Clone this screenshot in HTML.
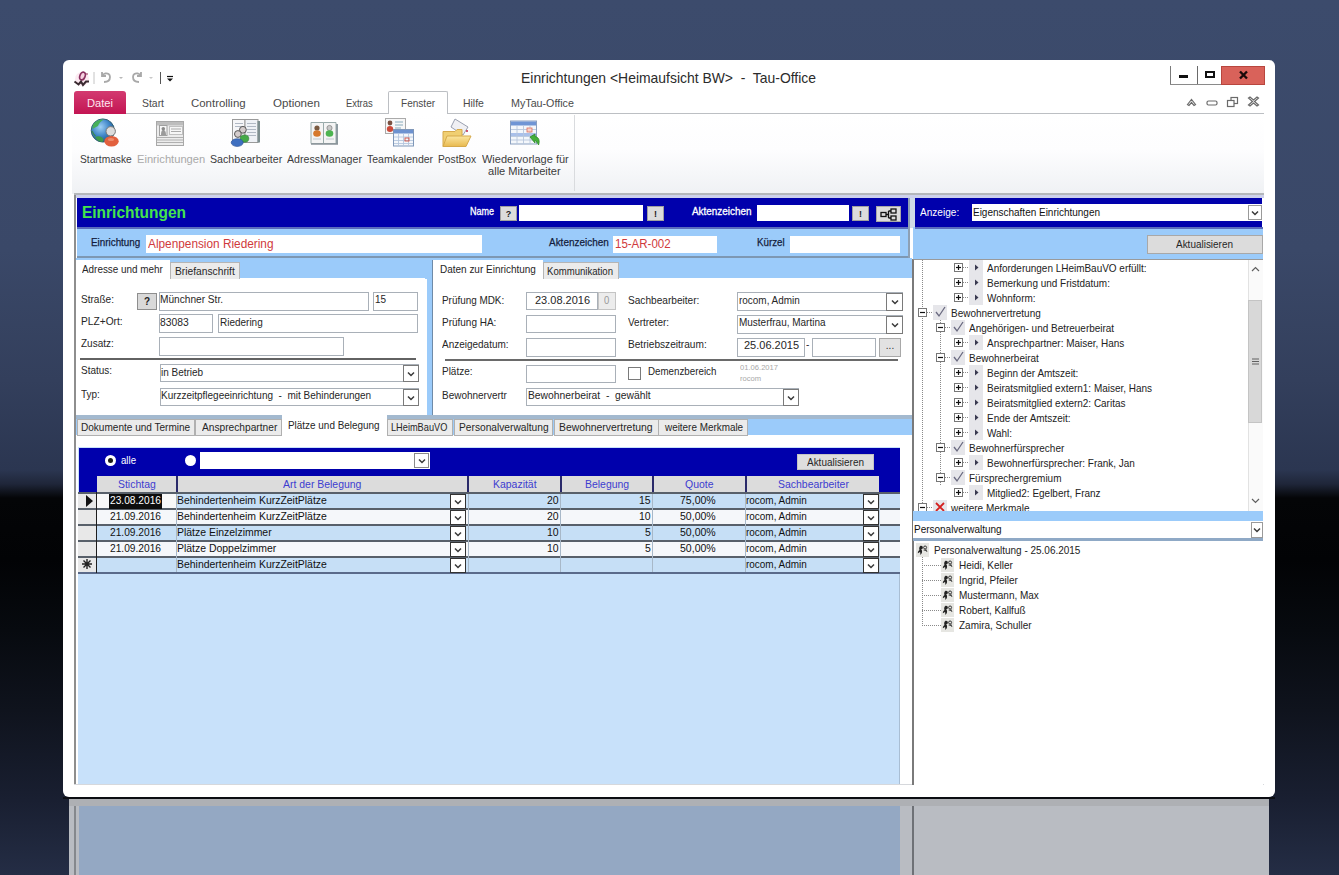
<!DOCTYPE html>
<html><head><meta charset="utf-8">
<style>
*{margin:0;padding:0;box-sizing:border-box}
html,body{width:1339px;height:875px;overflow:hidden}
body{position:relative;font-family:"Liberation Sans",sans-serif;font-size:11px;color:#111;
background:linear-gradient(to bottom,#3c4b6c 0px,#3a4868 250px,#333f5c 380px,#2b3651 470px,#1f2639 484px,#040507 498px,#020305 560px,#070a0f 630px,#0f131d 710px,#191f31 800px,#242d45 875px)}
.a{position:absolute}
.t{position:absolute;white-space:pre;transform-origin:0 0}
svg{overflow:visible}
</style></head><body>

<div class="a" style="left:63px;top:60px;width:1212px;height:737px;background:#fff;border-radius:6px;"></div>
<div class="a" style="left:72px;top:114px;width:1192px;height:80px;background:linear-gradient(#fff 0%,#fdfdfe 45%,#eff1f4 100%);"></div>
<div class="a" style="left:74px;top:113px;width:1190px;height:1px;background:#bcbfc3;"></div>
<div class="a" style="left:74px;top:193px;width:1190px;height:2px;background:#b4b7bb;"></div>
<div class="a" style="left:74px;top:91px;width:52px;height:23px;background:linear-gradient(#d33a70,#c31553);border-radius:3px 3px 0 0;"></div>
<div class="t" style="left:87.00px;top:98.19px;font-size:11px;line-height:11px;color:#ffe6ef;transform:scaleX(1.0125);">Datei</div>
<div class="a" style="left:388px;top:91px;width:60px;height:23px;background:#fff;border:1px solid #bcbfc3;border-bottom:none;border-radius:2px 2px 0 0;"></div>
<div class="t" style="left:142.00px;top:98.19px;font-size:11px;line-height:11px;color:#4a4a4a;transform:scaleX(0.9471);">Start</div>
<div class="t" style="left:191.40px;top:98.19px;font-size:11px;line-height:11px;color:#4a4a4a;transform:scaleX(1.0384);">Controlling</div>
<div class="t" style="left:272.70px;top:98.19px;font-size:11px;line-height:11px;color:#4a4a4a;transform:scaleX(1.0506);">Optionen</div>
<div class="t" style="left:346.30px;top:98.19px;font-size:11px;line-height:11px;color:#4a4a4a;transform:scaleX(0.8565);">Extras</div>
<div class="t" style="left:400.90px;top:98.19px;font-size:11px;line-height:11px;color:#4a4a4a;transform:scaleX(0.9145);">Fenster</div>
<div class="t" style="left:463.00px;top:98.19px;font-size:11px;line-height:11px;color:#4a4a4a;transform:scaleX(0.9498);">Hilfe</div>
<div class="t" style="left:511.30px;top:98.19px;font-size:11px;line-height:11px;color:#4a4a4a;transform:scaleX(0.9739);">MyTau-Office</div>
<div class="t" style="left:521.00px;top:70.73px;font-size:14.5px;line-height:14.5px;color:#2b2b2b;transform:scaleX(0.9599);">Einrichtungen &lt;Heimaufsicht BW&gt;  -  Tau-Office</div>
<div class="a" style="left:574px;top:115px;width:1px;height:76px;background:#d9dbde;"></div>
<div class="t" style="left:79.80px;top:154.19px;font-size:11px;line-height:11px;color:#3c3c3c;transform:scaleX(0.9312);">Startmaske</div>
<div class="t" style="left:136.50px;top:154.19px;font-size:11px;line-height:11px;color:#a9a9a9;transform:scaleX(1.0139);">Einrichtungen</div>
<div class="t" style="left:209.70px;top:154.19px;font-size:11px;line-height:11px;color:#3c3c3c;transform:scaleX(0.9692);">Sachbearbeiter</div>
<div class="t" style="left:286.60px;top:154.19px;font-size:11px;line-height:11px;color:#3c3c3c;transform:scaleX(0.9647);">AdressManager</div>
<div class="t" style="left:367.00px;top:154.19px;font-size:11px;line-height:11px;color:#3c3c3c;transform:scaleX(0.9567);">Teamkalender</div>
<div class="t" style="left:438.00px;top:154.19px;font-size:11px;line-height:11px;color:#3c3c3c;transform:scaleX(0.9325);">PostBox</div>
<div class="t" style="left:481.50px;top:154.19px;font-size:11px;line-height:11px;color:#3c3c3c;transform:scaleX(0.9988);">Wiedervorlage für</div>
<div class="t" style="left:487.70px;top:166.19px;font-size:11px;line-height:11px;color:#3c3c3c;transform:scaleX(1.0078);">alle Mitarbeiter</div>
<div class="a" style="left:1170px;top:66px;width:1px;height:19px;background:#7a7a7a;"></div>
<div class="a" style="left:1197px;top:66px;width:1px;height:19px;background:#6a6a6a;"></div>
<div class="a" style="left:1170px;top:84px;width:51px;height:1px;background:#8a8a8a;"></div>
<div class="a" style="left:1221px;top:66px;width:44px;height:19px;background:#d9625a;border:1px solid #b8463e;"></div>
<div class="a" style="left:1179px;top:75px;width:9px;height:3px;background:#111;"></div>
<div class="a" style="left:1205px;top:71px;width:10px;height:7px;border:2px solid #111;border-top-width:2px"></div>
<svg class="a" style="left:1238px;top:70px" width="11" height="10" viewBox="0 0 11 10"><path d="M2 1.5L9 8.5M9 1.5L2 8.5" stroke="#1a0a0a" stroke-width="2.4"/></svg>
<svg class="a" style="left:1186px;top:96px" width="80" height="12" viewBox="0 0 80 12"><g fill="none" stroke="#6a6a6a" stroke-width="1.2"><path d="M1.5 8.5L5.5 3.5L9.5 8.5L8 9.5L5.5 6.5L3 9.5Z"/><rect x="21" y="5" width="10" height="4" rx="1.5"/><rect x="45" y="1.5" width="6.5" height="6"/><rect x="41.5" y="4.5" width="6.5" height="6" fill="#fff"/><path d="M62.5 2L66.5 5.5L62.5 9L64 10L67.5 7L71 10L72.5 9L68.5 5.5L72.5 2L71 1L67.5 4L64 1Z"/></g></svg>
<svg class="a" style="left:73px;top:70px" width="105" height="18" viewBox="0 0 105 18">
<ellipse cx="9" cy="9" rx="7" ry="7" fill="#fbe4ee" opacity="0.8"/><ellipse cx="9.5" cy="6" rx="2.6" ry="4" transform="rotate(20 9.5 6)" fill="#f6d0e0" stroke="#8a3060" stroke-width="1.6"/>
<path d="M1.5 11.5L5.5 14.5L8 11.5L10 15L13 11.5H16" fill="none" stroke="#3a2a30" stroke-width="2"/>
<circle cx="14" cy="4" r="0.9" fill="#b06080"/>
<path d="M21 2V14" stroke="#c4c4c4" stroke-width="1"/>
<path d="M31 12C35 12 37 10 37 7C37 4 35 3 32 3.5L29 5M29 2V6H33" fill="none" stroke="#a9a9a9" stroke-width="1.8"/>
<path d="M46 7L48 9L50 7Z" fill="#b8b8b8"/>
<path d="M66 12C62 12 60 10 60 7C60 4 62 3 65 3.5L68 5M68 2V6H64" fill="none" stroke="#a9a9a9" stroke-width="1.8"/>
<path d="M76 7L78 9L80 7Z" fill="#c8c8c8"/>
<path d="M87.5 2V14" stroke="#555" stroke-width="1"/>
<path d="M94 6.5H100" stroke="#111" stroke-width="1.2"/><path d="M94 8.5H100L97 11.5Z" fill="#111"/>
</svg>
<svg class="a" style="left:0;top:0" width="600" height="160" viewBox="0 0 600 160">
<defs>
<radialGradient id="gl" cx="0.4" cy="0.35" r="0.7"><stop offset="0" stop-color="#9fd0f5"/><stop offset="0.55" stop-color="#3f86c8"/><stop offset="1" stop-color="#1d4f80"/></radialGradient>
<linearGradient id="fo" x1="0" y1="0" x2="0" y2="1"><stop offset="0" stop-color="#fbe6a0"/><stop offset="1" stop-color="#e8b94e"/></linearGradient>
</defs>
<!-- globe -->
<circle cx="102.8" cy="130.5" r="11.6" fill="url(#gl)" stroke="#2a5a6a" stroke-width="0.9"/>
<path d="M93 125C95 121 99 119.5 104 119.5C101 121 99 123 98 126C96 127 94 128 92.5 129C92.5 127.5 92.7 126 93 125Z" fill="#46b05a"/>
<path d="M95 137C98 135.5 101 136 103 138.5C104 140 103.5 141.5 102 142C99 141.5 96.5 140 95 137Z" fill="#3f9a4a"/>
<path d="M92 131C93 133 94 135 95.5 136" stroke="#3a8a50" stroke-width="1.2" fill="none"/>
<circle cx="110.7" cy="131.3" r="4.7" fill="#dcdcdc" stroke="#777" stroke-width="1"/>
<ellipse cx="111.5" cy="141.2" rx="7.2" ry="5.3" fill="#e2603e"/>
<ellipse cx="111" cy="139.5" rx="3" ry="1.5" fill="#f4a080" opacity="0.7"/>
<!-- Einrichtungen card -->
<rect x="156.5" y="121.5" width="27" height="24" fill="#ececec" stroke="#a8a8a8"/>
<rect x="157" y="122" width="26" height="3.5" fill="#bdbdbd"/>
<rect x="159.5" y="125.5" width="7.5" height="10" fill="#f8f8f8" stroke="#a0a0a0"/>
<path d="M161 135C161 131 162 130 163.3 130C164.6 130 166 131 166 135Z" fill="#9a9a9a"/>
<circle cx="163.3" cy="128.8" r="1.8" fill="#8a8a8a"/>
<rect x="169.5" y="126.5" width="13" height="8" fill="#f6f6f6" stroke="#c0c0c0"/>
<path d="M171 129H181M171 131.5H181" stroke="#aaa" stroke-width="1.2"/>
<path d="M157 137.5H183M157 140H183M157 142.5H183" stroke="#b0b0b0" stroke-width="1.2"/>
<!-- Sachbearbeiter book -->
<rect x="232.5" y="119.5" width="12.5" height="23" fill="#f6f6f8" stroke="#9a9a9a"/>
<rect x="245" y="119.5" width="13" height="23" fill="#eef1f6" stroke="#9a9a9a"/>
<rect x="257.5" y="121" width="2.5" height="21.5" fill="#7d8e90"/>
<path d="M247 123.5H256M247 126.5H256M247 129.5H256M247 132.5H256M247 135.5H256M235 123.5H243M235 126.5H243" stroke="#b0b8c4"/>
<circle cx="242.9" cy="129.8" r="3.4" fill="#d4cccc" stroke="#555" stroke-width="1"/>
<circle cx="237.9" cy="134" r="3.4" fill="#d4cccc" stroke="#555" stroke-width="1"/>
<ellipse cx="244.5" cy="138.6" rx="4.3" ry="3.6" fill="#46aa48" stroke="#2d7a30" stroke-width="0.6"/>
<ellipse cx="237.2" cy="142.6" rx="6" ry="3.9" fill="#3f6fc0" stroke="#2a4f90" stroke-width="0.6"/>
<!-- AdressManager book -->
<path d="M311 122.5H323.5V143.5H311Z" fill="#f4f4f4" stroke="#9aa"/>
<path d="M323.5 122.5H336V143.5H323.5Z" fill="#f4f4f4" stroke="#9aa"/>
<rect x="336" y="124" width="2" height="20" fill="#8d9aa0"/>
<path d="M311 144H338" stroke="#8a9299" stroke-width="1.5"/>
<circle cx="317" cy="128" r="2.6" fill="#7a5a40"/>
<ellipse cx="317" cy="133.5" rx="3.8" ry="3.2" fill="#d6782c"/>
<circle cx="329.5" cy="128" r="2.6" fill="#c8c8c8" stroke="#888" stroke-width="0.8"/>
<ellipse cx="329.5" cy="133.5" rx="3.8" ry="3.2" fill="#4cb450"/>
<path d="M313 139H321M326 139H334" stroke="#c0c8d0"/>
<!-- Teamkalender -->
<rect x="385.5" y="118.5" width="20" height="15" fill="#f7f7f7" stroke="#aaa"/>
<circle cx="390" cy="123" r="2.4" fill="#7a5040"/>
<ellipse cx="390" cy="129" rx="3.2" ry="3" fill="#cc4a3a"/>
<path d="M395 122H403M395 125H403M395 128H401" stroke="#8ab"/>
<rect x="393.5" y="129.5" width="20" height="16.5" fill="#f4f7fb" stroke="#7f97b8"/>
<rect x="394" y="130" width="19" height="3.5" fill="#6d92d0"/>
<path d="M394 137H413M394 140.5H413M394 143.5H413M398.5 133.5V146M403.5 133.5V146M408.5 133.5V146" stroke="#b6c6de" stroke-width="0.9"/>
<rect x="405" y="138" width="4" height="3" fill="none" stroke="#d05040" stroke-width="0.9"/>
<!-- PostBox -->
<path d="M455 119L468 127L463 135L451 127Z" fill="#f0f0f4" stroke="#9aa0b0"/>
<circle cx="467" cy="131" r="1" fill="#c02040"/>
<path d="M443 131.5H455L457 129.5H462V146.5H443Z" fill="#f0cf72" stroke="#d6a94a"/>
<path d="M443 146.5L447 136H471L466 146.5Z" fill="url(#fo)" stroke="#d6a94a"/>
<!-- Wiedervorlage -->
<rect x="510.5" y="121" width="26" height="23" fill="#f4f7fb" stroke="#8ba0c0"/>
<rect x="511" y="121.5" width="25" height="4" fill="#6f95d5"/>
<rect x="511" y="133" width="25" height="3" fill="#a9c0ea"/>
<path d="M511 129.5H536M511 136.5H536M511 140H536M517 125.5V144M523.5 125.5V144M530 125.5V144" stroke="#b8c6dc" stroke-width="0.9"/>
<rect x="527" y="128" width="5" height="4" fill="#f6d2c8" stroke="#e07060" stroke-width="0.8"/>
<path d="M530 137L535 134V136.5C539 137 540 141 538.5 145C537 142 536 140.5 535 140.5V143Z" fill="#45b03a" stroke="#2e8a2a" stroke-width="0.8"/>
</svg>
<div class="a" style="left:74px;top:195px;width:1190px;height:590px;background:#fff;border-left:2px solid #8e8e8e;"></div>
<div class="a" style="left:76px;top:195px;width:1188px;height:3px;background:#cdd1ec;"></div>
<div class="a" style="left:77px;top:198px;width:832px;height:29px;background:#0000ac;"></div>
<div class="t" style="left:82.30px;top:203.53px;font-size:16.5px;line-height:16.5px;color:#44e44c;font-weight:bold;transform:scaleX(0.9377);">Einrichtungen</div>
<div class="t" style="left:470.30px;top:206.11px;font-size:10.5px;line-height:10.5px;color:#fff;transform:scaleX(0.8569);-webkit-text-stroke:0.3px #fff;">Name</div>
<div class="a" style="left:500px;top:206px;width:17px;height:15px;background:#dcdcdc;border:1px solid #a0a0a0"></div>
<div class="t" style="left:505.75px;top:209.88px;font-size:9px;line-height:9px;color:#222;font-weight:bold;">?</div>
<div class="a" style="left:519px;top:205px;width:124px;height:16px;background:#fff;"></div>
<div class="a" style="left:647px;top:206px;width:17px;height:15px;background:#dcdcdc;border:1px solid #a0a0a0"></div>
<div class="t" style="left:654.00px;top:209.88px;font-size:9px;line-height:9px;color:#222;font-weight:bold;">!</div>
<div class="t" style="left:691.90px;top:206.11px;font-size:10.5px;line-height:10.5px;color:#fff;transform:scaleX(0.9423);-webkit-text-stroke:0.3px #fff;">Aktenzeichen</div>
<div class="a" style="left:757px;top:205px;width:92px;height:16px;background:#fff;"></div>
<div class="a" style="left:852px;top:206px;width:17px;height:15px;background:#dcdcdc;border:1px solid #a0a0a0"></div>
<div class="t" style="left:859.00px;top:209.88px;font-size:9px;line-height:9px;color:#222;font-weight:bold;">!</div>
<div class="a" style="left:876px;top:206px;width:25px;height:16px;background:#dcdcdc;border:1px solid #a8a8a8"></div>
<svg class="a" style="left:880px;top:208px" width="18" height="13" viewBox="0 0 18 13"><g fill="none" stroke="#111" stroke-width="1.3"><rect x="1" y="4.5" width="5" height="4"/><rect x="11" y="1" width="5" height="4"/><rect x="11" y="8" width="5" height="4"/><path d="M6 6.5H8.5M8.5 3V10M8.5 3H11M8.5 10H11"/></g></svg>
<div class="a" style="left:77px;top:227px;width:833px;height:31px;background:#9bcbfa;border-top:2px solid #5b6cbc;border-bottom:2px solid #7d97b2;"></div>
<div class="a" style="left:908px;top:198px;width:2px;height:60px;background:#8da0b4;"></div>
<div class="t" style="left:91.20px;top:236.61px;font-size:10.5px;line-height:10.5px;color:#141c3c;transform:scaleX(0.9385);-webkit-text-stroke:0.25px #141c3c;">Einrichtung</div>
<div class="a" style="left:146px;top:235px;width:336px;height:18px;background:#fff;"></div>
<div class="t" style="left:148.00px;top:237.84px;font-size:12px;line-height:12px;color:#d03a3c;transform:scaleX(0.9850);">Alpenpension Riedering</div>
<div class="t" style="left:548.60px;top:236.61px;font-size:10.5px;line-height:10.5px;color:#141c3c;transform:scaleX(0.9486);-webkit-text-stroke:0.25px #141c3c;">Aktenzeichen</div>
<div class="a" style="left:613px;top:236px;width:104px;height:17px;background:#fff;"></div>
<div class="t" style="left:614.60px;top:237.84px;font-size:12px;line-height:12px;color:#d03a3c;transform:scaleX(0.9582);">15-AR-002</div>
<div class="t" style="left:757.00px;top:236.61px;font-size:10.5px;line-height:10.5px;color:#141c3c;transform:scaleX(0.9274);-webkit-text-stroke:0.25px #141c3c;">Kürzel</div>
<div class="a" style="left:790px;top:236px;width:110px;height:17px;background:#fff;"></div>
<div class="a" style="left:76px;top:258px;width:836px;height:21px;background:#9bcbfa;"></div>
<div class="a" style="left:76px;top:278px;width:349px;height:137px;background:#fff;"></div>
<div class="a" style="left:427px;top:278px;width:6px;height:138px;background:#9bcbfa;"></div>
<div class="a" style="left:76px;top:260px;width:94px;height:19px;background:#fff;"></div>
<div class="t" style="left:81.80px;top:263.61px;font-size:10.5px;line-height:10.5px;color:#262626;transform:scaleX(0.9430);">Adresse und mehr</div>
<div class="a" style="left:170px;top:262px;width:70px;height:17px;background:#ebebeb;border:1px solid #b5b5b5;border-bottom:none;"></div>
<div class="t" style="left:174.80px;top:266.11px;font-size:10.5px;line-height:10.5px;color:#262626;transform:scaleX(0.9760);">Briefanschrift</div>
<div class="t" style="left:80.80px;top:293.91px;font-size:10.5px;line-height:10.5px;color:#262626;transform:scaleX(0.9586);">Straße:</div>
<div class="a" style="left:137px;top:293px;width:20px;height:17px;background:#d9d9d9;border:1px solid #8e8e8e"></div>
<div class="t" style="left:143.95px;top:296.84px;font-size:10px;line-height:10px;color:#222;font-weight:bold;">?</div>
<div class="a" style="left:159px;top:292px;width:210px;height:19px;background:#fff;border:1px solid #a9b0b8"></div>
<div class="t" style="left:160.30px;top:294.41px;font-size:10.5px;line-height:10.5px;color:#262626;transform:scaleX(0.9639);">Münchner Str.</div>
<div class="a" style="left:373px;top:292px;width:45px;height:19px;background:#fff;border:1px solid #a9b0b8"></div>
<div class="t" style="left:375.00px;top:294.41px;font-size:10.5px;line-height:10.5px;color:#262626;transform:scaleX(0.9500);">15</div>
<div class="t" style="left:80.80px;top:315.91px;font-size:10.5px;line-height:10.5px;color:#262626;transform:scaleX(0.9700);">PLZ+Ort:</div>
<div class="a" style="left:159px;top:314px;width:54px;height:19px;background:#fff;border:1px solid #a9b0b8"></div>
<div class="t" style="left:160.30px;top:316.91px;font-size:10.5px;line-height:10.5px;color:#262626;transform:scaleX(0.9830);">83083</div>
<div class="a" style="left:218px;top:314px;width:200px;height:19px;background:#fff;border:1px solid #a9b0b8"></div>
<div class="t" style="left:220.00px;top:316.91px;font-size:10.5px;line-height:10.5px;color:#262626;transform:scaleX(0.9500);">Riedering</div>
<div class="t" style="left:80.80px;top:337.91px;font-size:10.5px;line-height:10.5px;color:#262626;transform:scaleX(0.9500);">Zusatz:</div>
<div class="a" style="left:159px;top:337px;width:185px;height:19px;background:#fff;border:1px solid #a9b0b8"></div>
<div class="a" style="left:80px;top:358px;width:336px;height:2px;background:#626262;"></div>
<div class="t" style="left:81.00px;top:365.41px;font-size:10.5px;line-height:10.5px;color:#262626;transform:scaleX(0.9500);">Status:</div>
<div class="a" style="left:160px;top:364px;width:259px;height:18px;background:#fff;border:1px solid #a9b0b8"></div>
<div class="t" style="left:161.00px;top:366.91px;font-size:10.5px;line-height:10.5px;color:#262626;transform:scaleX(0.9500);">in Betrieb</div>
<div class="a" style="left:403px;top:365px;width:16px;height:17px;background:#fff;border:1px solid #7a7a7a"></div>
<svg class="a" style="left:406.0px;top:369.5px" width="10" height="8" viewBox="0 0 10 8"><path d="M2 2.5L5 5.5L8 2.5" fill="none" stroke="#3a3a3a" stroke-width="1.5"/></svg>
<div class="t" style="left:81.00px;top:388.91px;font-size:10.5px;line-height:10.5px;color:#262626;transform:scaleX(0.9500);">Typ:</div>
<div class="a" style="left:160px;top:388px;width:259px;height:18px;background:#fff;border:1px solid #a9b0b8"></div>
<div class="t" style="left:161.00px;top:390.41px;font-size:10.5px;line-height:10.5px;color:#262626;transform:scaleX(0.9500);">Kurzzeitpflegeeinrichtung  -  mit Behinderungen</div>
<div class="a" style="left:403px;top:389px;width:16px;height:17px;background:#fff;border:1px solid #7a7a7a"></div>
<svg class="a" style="left:406.0px;top:393.5px" width="10" height="8" viewBox="0 0 10 8"><path d="M2 2.5L5 5.5L8 2.5" fill="none" stroke="#3a3a3a" stroke-width="1.5"/></svg>
<div class="a" style="left:432px;top:278px;width:480px;height:138px;background:#fff;border-left:1px solid #6f8ba8;"></div>
<div class="a" style="left:432px;top:260px;width:111px;height:19px;background:#fff;border-left:1px solid #6f8ba8;"></div>
<div class="t" style="left:439.60px;top:263.61px;font-size:10.5px;line-height:10.5px;color:#262626;transform:scaleX(0.9498);">Daten zur Einrichtung</div>
<div class="a" style="left:543px;top:262px;width:76px;height:17px;background:#ebebeb;border:1px solid #b5b5b5;border-bottom:none;"></div>
<div class="t" style="left:547.00px;top:266.11px;font-size:10.5px;line-height:10.5px;color:#262626;transform:scaleX(0.9121);">Kommunikation</div>
<div class="t" style="left:441.50px;top:294.91px;font-size:10.5px;line-height:10.5px;color:#262626;transform:scaleX(0.9433);">Prüfung MDK:</div>
<div class="a" style="left:526px;top:292px;width:72px;height:18px;background:#fff;border:1px solid #a9b0b8"></div>
<div class="t" style="left:534.50px;top:295.41px;font-size:10.5px;line-height:10.5px;color:#262626;transform:scaleX(1.0467);">23.08.2016</div>
<div class="a" style="left:598px;top:292px;width:18px;height:18px;background:#ececec;border:1px solid #c4c4c4"></div>
<div class="t" style="left:604.36px;top:295.84px;font-size:10px;line-height:10px;color:#999;transform:scaleX(0.9500);">0</div>
<div class="t" style="left:628.00px;top:294.91px;font-size:10.5px;line-height:10.5px;color:#262626;transform:scaleX(0.9632);">Sachbearbeiter:</div>
<div class="a" style="left:737px;top:292px;width:166px;height:19px;background:#fff;border:1px solid #a9b0b8"></div>
<div class="t" style="left:739.00px;top:295.41px;font-size:10.5px;line-height:10.5px;color:#262626;transform:scaleX(0.9472);">rocom, Admin</div>
<div class="a" style="left:886px;top:293px;width:17px;height:18px;background:#fff;border:1px solid #7a7a7a"></div>
<svg class="a" style="left:889.5px;top:298.0px" width="10" height="8" viewBox="0 0 10 8"><path d="M2 2.5L5 5.5L8 2.5" fill="none" stroke="#3a3a3a" stroke-width="1.5"/></svg>
<div class="t" style="left:441.50px;top:316.91px;font-size:10.5px;line-height:10.5px;color:#262626;transform:scaleX(0.9500);">Prüfung HA:</div>
<div class="a" style="left:526px;top:315px;width:90px;height:18px;background:#fff;border:1px solid #a9b0b8"></div>
<div class="t" style="left:628.00px;top:316.91px;font-size:10.5px;line-height:10.5px;color:#262626;transform:scaleX(0.9500);">Vertreter:</div>
<div class="a" style="left:737px;top:315px;width:166px;height:19px;background:#fff;border:1px solid #a9b0b8"></div>
<div class="t" style="left:739.00px;top:317.41px;font-size:10.5px;line-height:10.5px;color:#262626;transform:scaleX(0.9500);">Musterfrau, Martina</div>
<div class="a" style="left:886px;top:316px;width:17px;height:18px;background:#fff;border:1px solid #7a7a7a"></div>
<svg class="a" style="left:889.5px;top:321.0px" width="10" height="8" viewBox="0 0 10 8"><path d="M2 2.5L5 5.5L8 2.5" fill="none" stroke="#3a3a3a" stroke-width="1.5"/></svg>
<div class="t" style="left:441.50px;top:338.91px;font-size:10.5px;line-height:10.5px;color:#262626;transform:scaleX(0.9500);">Anzeigedatum:</div>
<div class="a" style="left:526px;top:338px;width:90px;height:19px;background:#fff;border:1px solid #a9b0b8"></div>
<div class="t" style="left:628.00px;top:338.91px;font-size:10.5px;line-height:10.5px;color:#262626;transform:scaleX(0.9634);">Betriebszeitraum:</div>
<div class="a" style="left:737px;top:338px;width:68px;height:19px;background:#fff;border:1px solid #a9b0b8"></div>
<div class="t" style="left:743.50px;top:340.41px;font-size:10.5px;line-height:10.5px;color:#262626;transform:scaleX(1.0467);">25.06.2015</div>
<div class="t" style="left:806.00px;top:338.91px;font-size:10.5px;line-height:10.5px;color:#262626;transform:scaleX(0.9500);">-</div>
<div class="a" style="left:812px;top:338px;width:64px;height:19px;background:#fff;border:1px solid #a9b0b8"></div>
<div class="a" style="left:879px;top:338px;width:22px;height:19px;background:#e2e2e2;border:1px solid #a8a8a8"></div>
<div class="t" style="left:885.83px;top:340.84px;font-size:10px;line-height:10px;color:#333;">...</div>
<div class="a" style="left:445px;top:359px;width:453px;height:2px;background:#6a6a6a;"></div>
<div class="t" style="left:441.50px;top:366.41px;font-size:10.5px;line-height:10.5px;color:#262626;transform:scaleX(0.9500);">Plätze:</div>
<div class="a" style="left:526px;top:365px;width:90px;height:18px;background:#fff;border:1px solid #a9b0b8"></div>
<div class="a" style="left:628px;top:367px;width:13px;height:13px;background:#fff;border:1px solid #7a7a7a"></div>
<div class="t" style="left:648.20px;top:366.41px;font-size:10.5px;line-height:10.5px;color:#262626;transform:scaleX(0.9302);">Demenzbereich</div>
<div class="t" style="left:740.40px;top:364.23px;font-size:8px;line-height:8px;color:#a8a8a8;transform:scaleX(0.9500);">01.06.2017</div>
<div class="t" style="left:740.40px;top:375.23px;font-size:8px;line-height:8px;color:#a8a8a8;transform:scaleX(0.9500);">rocom</div>
<div class="t" style="left:441.50px;top:389.91px;font-size:10.5px;line-height:10.5px;color:#262626;transform:scaleX(0.9500);">Bewohnervertr</div>
<div class="a" style="left:526px;top:388px;width:273px;height:18px;background:#fff;border:1px solid #a9b0b8"></div>
<div class="t" style="left:527.50px;top:390.41px;font-size:10.5px;line-height:10.5px;color:#262626;transform:scaleX(0.9816);">Bewohnerbeirat  -  gewählt</div>
<div class="a" style="left:783px;top:389px;width:16px;height:17px;background:#fff;border:1px solid #7a7a7a"></div>
<svg class="a" style="left:786.0px;top:393.5px" width="10" height="8" viewBox="0 0 10 8"><path d="M2 2.5L5 5.5L8 2.5" fill="none" stroke="#3a3a3a" stroke-width="1.5"/></svg>
<div class="a" style="left:76px;top:415px;width:836px;height:4px;background:#a3b9cf;"></div>
<div class="a" style="left:76px;top:419px;width:836px;height:16px;background:#9bcbfa;"></div>
<div class="a" style="left:77px;top:419px;width:118px;height:17px;background:#ebebeb;border:1px solid #b0b0b0;"></div>
<div class="t" style="left:81.20px;top:421.69px;font-size:11px;line-height:11px;color:#262626;transform:scaleX(0.9128);">Dokumente und Termine</div>
<div class="a" style="left:195px;top:419px;width:87px;height:17px;background:#ebebeb;border:1px solid #b0b0b0;"></div>
<div class="t" style="left:201.70px;top:421.69px;font-size:11px;line-height:11px;color:#262626;transform:scaleX(0.9260);">Ansprechpartner</div>
<div class="a" style="left:282px;top:415px;width:105px;height:20px;background:#fff;"></div>
<div class="t" style="left:288.40px;top:419.69px;font-size:11px;line-height:11px;color:#262626;transform:scaleX(0.9023);">Plätze und Belegung</div>
<div class="a" style="left:387px;top:419px;width:66px;height:17px;background:#ebebeb;border:1px solid #b0b0b0;"></div>
<div class="t" style="left:391.00px;top:421.69px;font-size:11px;line-height:11px;color:#262626;transform:scaleX(0.8372);">LHeimBauVO</div>
<div class="a" style="left:454px;top:419px;width:99px;height:17px;background:#ebebeb;border:1px solid #b0b0b0;"></div>
<div class="t" style="left:458.70px;top:421.69px;font-size:11px;line-height:11px;color:#262626;transform:scaleX(0.9275);">Personalverwaltung</div>
<div class="a" style="left:554px;top:419px;width:105px;height:17px;background:#ebebeb;border:1px solid #b0b0b0;"></div>
<div class="t" style="left:559.40px;top:421.69px;font-size:11px;line-height:11px;color:#262626;transform:scaleX(0.9450);">Bewohnervertretung</div>
<div class="a" style="left:658px;top:419px;width:90px;height:17px;background:#ebebeb;border:1px solid #b0b0b0;"></div>
<div class="t" style="left:664.60px;top:421.69px;font-size:11px;line-height:11px;color:#262626;transform:scaleX(0.8998);">weitere Merkmale</div>
<div class="a" style="left:78px;top:447px;width:822px;height:338px;background:#c8e1fa;"></div>
<div class="a" style="left:912px;top:415px;width:2px;height:370px;background:#777;"></div>
<div class="a" style="left:899px;top:492px;width:1px;height:292px;background:#a9bed4;"></div>
<div class="a" style="left:74px;top:784px;width:1190px;height:1px;background:#d6d8dc;"></div>
<div class="a" style="left:79px;top:448px;width:821px;height:44px;background:#0000ac;"></div>
<div class="a" style="left:105px;top:455px;width:11px;height:11px;border-radius:50%;background:#fff"></div>
<div class="a" style="left:108px;top:458px;width:5px;height:5px;border-radius:50%;background:#1a1a1a"></div>
<div class="t" style="left:121.00px;top:455.11px;font-size:10.5px;line-height:10.5px;color:#fff;transform:scaleX(0.9178);">alle</div>
<div class="a" style="left:185px;top:455px;width:11px;height:11px;border-radius:50%;background:#fff"></div>
<div class="a" style="left:200px;top:452px;width:230px;height:17px;background:#fff;"></div>
<div class="a" style="left:414px;top:453px;width:15px;height:15px;background:#fff;border:1px solid #8a8a8a"></div>
<svg class="a" style="left:416.5px;top:456.5px" width="10" height="8" viewBox="0 0 10 8"><path d="M2 2.5L5 5.5L8 2.5" fill="none" stroke="#3a3a3a" stroke-width="1.5"/></svg>
<div class="a" style="left:797px;top:454px;width:77px;height:16px;background:#dedede;border:1px solid #c4c4c4"></div>
<div class="t" style="left:806.50px;top:457.11px;font-size:10.5px;line-height:10.5px;color:#262626;transform:scaleX(0.9482);">Aktualisieren</div>
<div class="a" style="left:97px;top:476px;width:782px;height:16px;background:#dcdcdc;"></div>
<div class="a" style="left:176px;top:476px;width:2px;height:16px;background:#2a2a6a;"></div>
<div class="a" style="left:467px;top:476px;width:2px;height:16px;background:#2a2a6a;"></div>
<div class="a" style="left:560px;top:476px;width:2px;height:16px;background:#2a2a6a;"></div>
<div class="a" style="left:652px;top:476px;width:2px;height:16px;background:#2a2a6a;"></div>
<div class="a" style="left:745px;top:476px;width:2px;height:16px;background:#2a2a6a;"></div>
<div class="t" style="left:117.62px;top:478.69px;font-size:11px;line-height:11px;color:#3d3dd0;transform:scaleX(0.9500);">Stichtag</div>
<div class="t" style="left:283.29px;top:478.69px;font-size:11px;line-height:11px;color:#3d3dd0;transform:scaleX(0.9500);">Art der Belegung</div>
<div class="t" style="left:492.72px;top:478.69px;font-size:11px;line-height:11px;color:#3d3dd0;transform:scaleX(0.9500);">Kapazität</div>
<div class="t" style="left:584.92px;top:478.69px;font-size:11px;line-height:11px;color:#3d3dd0;transform:scaleX(0.9500);">Belegung</div>
<div class="t" style="left:685.27px;top:478.69px;font-size:11px;line-height:11px;color:#3d3dd0;transform:scaleX(0.9500);">Quote</div>
<div class="t" style="left:777.57px;top:478.69px;font-size:11px;line-height:11px;color:#3d3dd0;transform:scaleX(0.9500);">Sachbearbeiter</div>
<div class="a" style="left:78px;top:492px;width:822px;height:16px;background:#c6dff6;"></div>
<div class="a" style="left:78px;top:508px;width:822px;height:16px;background:#f5f7fa;"></div>
<div class="a" style="left:78px;top:524px;width:822px;height:16px;background:#c6dff6;"></div>
<div class="a" style="left:78px;top:540px;width:822px;height:16px;background:#f5f7fa;"></div>
<div class="a" style="left:78px;top:556px;width:822px;height:16px;background:#c6dff6;"></div>
<div class="a" style="left:97px;top:493px;width:79px;height:15px;background:#f8f8f8;"></div>
<div class="a" style="left:78px;top:492px;width:18px;height:81px;background:#e8e8e8;"></div>
<div class="a" style="left:78px;top:492px;width:822px;height:2px;background:#58606a;"></div>
<div class="a" style="left:78px;top:508px;width:822px;height:2px;background:#58606a;"></div>
<div class="a" style="left:78px;top:524px;width:822px;height:2px;background:#58606a;"></div>
<div class="a" style="left:78px;top:540px;width:822px;height:2px;background:#58606a;"></div>
<div class="a" style="left:78px;top:556px;width:822px;height:2px;background:#58606a;"></div>
<div class="a" style="left:78px;top:572px;width:822px;height:2px;background:#5a6a8a;"></div>
<div class="a" style="left:96px;top:492px;width:1px;height:81px;background:#1e1e1e;"></div>
<div class="a" style="left:176px;top:494px;width:1px;height:78px;background:#a8b8c8;"></div>
<div class="a" style="left:468px;top:494px;width:1px;height:78px;background:#a8b8c8;"></div>
<div class="a" style="left:560px;top:494px;width:1px;height:78px;background:#a8b8c8;"></div>
<div class="a" style="left:652px;top:494px;width:1px;height:78px;background:#a8b8c8;"></div>
<div class="a" style="left:745px;top:494px;width:1px;height:78px;background:#a8b8c8;"></div>
<div class="a" style="left:879px;top:494px;width:1px;height:78px;background:#c0d0e0;"></div>
<div class="a" style="left:86px;top:495px;width:0;height:0;border-left:7px solid #111;border-top:6px solid transparent;border-bottom:6px solid transparent"></div>
<svg class="a" style="left:81px;top:558px" width="12" height="12" viewBox="0 0 12 12"><path d="M6 1V11M1 6H11M2.5 2.5L9.5 9.5M9.5 2.5L2.5 9.5" stroke="#222" stroke-width="1.4"/></svg>
<div class="a" style="left:109px;top:494px;width:53px;height:15px;background:#0d0d0d;"></div>
<div class="t" style="left:110.00px;top:494.69px;font-size:11px;line-height:11px;color:#fff;transform:scaleX(0.9265);">23.08.2016</div>
<div class="t" style="left:110.00px;top:510.69px;font-size:11px;line-height:11px;color:#111;transform:scaleX(0.9265);">21.09.2016</div>
<div class="t" style="left:110.00px;top:526.69px;font-size:11px;line-height:11px;color:#111;transform:scaleX(0.9265);">21.09.2016</div>
<div class="t" style="left:110.00px;top:542.69px;font-size:11px;line-height:11px;color:#111;transform:scaleX(0.9265);">21.09.2016</div>
<div class="t" style="left:176.50px;top:494.69px;font-size:11px;line-height:11px;color:#111;transform:scaleX(0.9500);">Behindertenheim KurzZeitPlätze</div>
<div class="a" style="left:450px;top:494px;width:16px;height:15px;background:#fff;border:1px solid #333"></div>
<svg class="a" style="left:453.0px;top:497.5px" width="10" height="8" viewBox="0 0 10 8"><path d="M2 2.5L5 5.5L8 2.5" fill="none" stroke="#3a3a3a" stroke-width="1.5"/></svg>
<div class="t" style="left:746.00px;top:495.11px;font-size:10.5px;line-height:10.5px;color:#111;transform:scaleX(0.9472);">rocom, Admin</div>
<div class="a" style="left:863px;top:494px;width:16px;height:15px;background:#fff;border:1px solid #333"></div>
<svg class="a" style="left:866.0px;top:497.5px" width="10" height="8" viewBox="0 0 10 8"><path d="M2 2.5L5 5.5L8 2.5" fill="none" stroke="#3a3a3a" stroke-width="1.5"/></svg>
<div class="t" style="left:176.50px;top:510.69px;font-size:11px;line-height:11px;color:#111;transform:scaleX(0.9500);">Behindertenheim KurzZeitPlätze</div>
<div class="a" style="left:450px;top:510px;width:16px;height:15px;background:#fff;border:1px solid #333"></div>
<svg class="a" style="left:453.0px;top:513.5px" width="10" height="8" viewBox="0 0 10 8"><path d="M2 2.5L5 5.5L8 2.5" fill="none" stroke="#3a3a3a" stroke-width="1.5"/></svg>
<div class="t" style="left:746.00px;top:511.11px;font-size:10.5px;line-height:10.5px;color:#111;transform:scaleX(0.9472);">rocom, Admin</div>
<div class="a" style="left:863px;top:510px;width:16px;height:15px;background:#fff;border:1px solid #333"></div>
<svg class="a" style="left:866.0px;top:513.5px" width="10" height="8" viewBox="0 0 10 8"><path d="M2 2.5L5 5.5L8 2.5" fill="none" stroke="#3a3a3a" stroke-width="1.5"/></svg>
<div class="t" style="left:176.50px;top:526.69px;font-size:11px;line-height:11px;color:#111;transform:scaleX(0.9500);">Plätze Einzelzimmer</div>
<div class="a" style="left:450px;top:526px;width:16px;height:15px;background:#fff;border:1px solid #333"></div>
<svg class="a" style="left:453.0px;top:529.5px" width="10" height="8" viewBox="0 0 10 8"><path d="M2 2.5L5 5.5L8 2.5" fill="none" stroke="#3a3a3a" stroke-width="1.5"/></svg>
<div class="t" style="left:746.00px;top:527.11px;font-size:10.5px;line-height:10.5px;color:#111;transform:scaleX(0.9472);">rocom, Admin</div>
<div class="a" style="left:863px;top:526px;width:16px;height:15px;background:#fff;border:1px solid #333"></div>
<svg class="a" style="left:866.0px;top:529.5px" width="10" height="8" viewBox="0 0 10 8"><path d="M2 2.5L5 5.5L8 2.5" fill="none" stroke="#3a3a3a" stroke-width="1.5"/></svg>
<div class="t" style="left:176.50px;top:542.69px;font-size:11px;line-height:11px;color:#111;transform:scaleX(0.9500);">Plätze Doppelzimmer</div>
<div class="a" style="left:450px;top:542px;width:16px;height:15px;background:#fff;border:1px solid #333"></div>
<svg class="a" style="left:453.0px;top:545.5px" width="10" height="8" viewBox="0 0 10 8"><path d="M2 2.5L5 5.5L8 2.5" fill="none" stroke="#3a3a3a" stroke-width="1.5"/></svg>
<div class="t" style="left:746.00px;top:543.11px;font-size:10.5px;line-height:10.5px;color:#111;transform:scaleX(0.9472);">rocom, Admin</div>
<div class="a" style="left:863px;top:542px;width:16px;height:15px;background:#fff;border:1px solid #333"></div>
<svg class="a" style="left:866.0px;top:545.5px" width="10" height="8" viewBox="0 0 10 8"><path d="M2 2.5L5 5.5L8 2.5" fill="none" stroke="#3a3a3a" stroke-width="1.5"/></svg>
<div class="t" style="left:176.50px;top:558.69px;font-size:11px;line-height:11px;color:#111;transform:scaleX(0.9500);">Behindertenheim KurzZeitPlätze</div>
<div class="a" style="left:450px;top:558px;width:16px;height:15px;background:#fff;border:1px solid #333"></div>
<svg class="a" style="left:453.0px;top:561.5px" width="10" height="8" viewBox="0 0 10 8"><path d="M2 2.5L5 5.5L8 2.5" fill="none" stroke="#3a3a3a" stroke-width="1.5"/></svg>
<div class="t" style="left:746.00px;top:559.11px;font-size:10.5px;line-height:10.5px;color:#111;transform:scaleX(0.9472);">rocom, Admin</div>
<div class="a" style="left:863px;top:558px;width:16px;height:15px;background:#fff;border:1px solid #333"></div>
<svg class="a" style="left:866.0px;top:561.5px" width="10" height="8" viewBox="0 0 10 8"><path d="M2 2.5L5 5.5L8 2.5" fill="none" stroke="#3a3a3a" stroke-width="1.5"/></svg>
<div class="t" style="left:546.68px;top:494.69px;font-size:11px;line-height:11px;color:#111;transform:scaleX(0.9500);">20</div>
<div class="t" style="left:639.08px;top:494.69px;font-size:11px;line-height:11px;color:#111;transform:scaleX(0.9500);">15</div>
<div class="t" style="left:680.15px;top:494.69px;font-size:11px;line-height:11px;color:#111;transform:scaleX(0.9570);">75,00%</div>
<div class="t" style="left:546.68px;top:510.69px;font-size:11px;line-height:11px;color:#111;transform:scaleX(0.9500);">20</div>
<div class="t" style="left:639.08px;top:510.69px;font-size:11px;line-height:11px;color:#111;transform:scaleX(0.9500);">10</div>
<div class="t" style="left:680.15px;top:510.69px;font-size:11px;line-height:11px;color:#111;transform:scaleX(0.9570);">50,00%</div>
<div class="t" style="left:546.68px;top:526.69px;font-size:11px;line-height:11px;color:#111;transform:scaleX(0.9500);">10</div>
<div class="t" style="left:644.89px;top:526.69px;font-size:11px;line-height:11px;color:#111;transform:scaleX(0.9500);">5</div>
<div class="t" style="left:680.15px;top:526.69px;font-size:11px;line-height:11px;color:#111;transform:scaleX(0.9570);">50,00%</div>
<div class="t" style="left:546.68px;top:542.69px;font-size:11px;line-height:11px;color:#111;transform:scaleX(0.9500);">10</div>
<div class="t" style="left:644.89px;top:542.69px;font-size:11px;line-height:11px;color:#111;transform:scaleX(0.9500);">5</div>
<div class="t" style="left:680.15px;top:542.69px;font-size:11px;line-height:11px;color:#111;transform:scaleX(0.9570);">50,00%</div>
<div class="a" style="left:915px;top:198px;width:347px;height:29px;background:#0000ac;"></div>
<div class="a" style="left:910px;top:198px;width:5px;height:30px;background:#d0dbe6;"></div>
<div class="t" style="left:920.40px;top:206.61px;font-size:10.5px;line-height:10.5px;color:#fff;transform:scaleX(0.9594);">Anzeige:</div>
<div class="a" style="left:972px;top:204px;width:290px;height:17px;background:#fff;"></div>
<div class="t" style="left:973.00px;top:207.11px;font-size:10.5px;line-height:10.5px;color:#111;transform:scaleX(0.9500);">Eigenschaften Einrichtungen</div>
<div class="a" style="left:1248px;top:205px;width:14px;height:15px;background:#fff;border:1px solid #9a9a9a"></div>
<svg class="a" style="left:1250.0px;top:208.5px" width="10" height="8" viewBox="0 0 10 8"><path d="M2 2.5L5 5.5L8 2.5" fill="none" stroke="#3a3a3a" stroke-width="1.5"/></svg>
<div class="a" style="left:913px;top:227px;width:350px;height:32px;background:#9bcbfa;"></div>
<div class="a" style="left:915px;top:227px;width:348px;height:2px;background:#5b6cbc;"></div>
<div class="a" style="left:1147px;top:235px;width:116px;height:19px;background:#dcdcdc;border:1px solid #a8a8a8"></div>
<div class="t" style="left:1176.00px;top:239.11px;font-size:10.5px;line-height:10.5px;color:#262626;transform:scaleX(0.9482);">Aktualisieren</div>
<div class="a" style="left:912px;top:259px;width:351px;height:252px;background:#fff;border-left:2px solid #7a7a7a;border-top:1px solid #9a9a9a;"></div>
<svg class="a" style="left:0;top:0;overflow:hidden;clip-path:inset(260px 0 364px 915px)" width="1339" height="875" viewBox="0 0 1339 875"><path d="M922.5 260V510" stroke="#8a8a8a" stroke-dasharray="1 1"/><path d="M940.5 320V485" stroke="#8a8a8a" stroke-dasharray="1 1"/><rect x="969" y="260" width="14" height="15" fill="#e6e6ea"/><rect x="954.5" y="263.5" width="8" height="8" fill="#fff" stroke="#777"/><path d="M956 267.5H961" stroke="#111" stroke-width="1.2"/><path d="M963 267.5H969" stroke="#8a8a8a" stroke-dasharray="1 1"/><path d="M958.5 265V270" stroke="#111" stroke-width="1.2"/><path d="M975 264.5L978.5 267.5L975 270.5Z" fill="#3a3a50"/><rect x="969" y="275" width="14" height="15" fill="#e6e6ea"/><rect x="954.5" y="278.5" width="8" height="8" fill="#fff" stroke="#777"/><path d="M956 282.5H961" stroke="#111" stroke-width="1.2"/><path d="M963 282.5H969" stroke="#8a8a8a" stroke-dasharray="1 1"/><path d="M958.5 280V285" stroke="#111" stroke-width="1.2"/><path d="M975 279.5L978.5 282.5L975 285.5Z" fill="#3a3a50"/><rect x="969" y="290" width="14" height="15" fill="#e6e6ea"/><rect x="954.5" y="293.5" width="8" height="8" fill="#fff" stroke="#777"/><path d="M956 297.5H961" stroke="#111" stroke-width="1.2"/><path d="M963 297.5H969" stroke="#8a8a8a" stroke-dasharray="1 1"/><path d="M958.5 295V300" stroke="#111" stroke-width="1.2"/><path d="M975 294.5L978.5 297.5L975 300.5Z" fill="#3a3a50"/><rect x="933" y="305" width="14" height="15" fill="#e6e6ea"/><rect x="918.5" y="308.5" width="8" height="8" fill="#fff" stroke="#777"/><path d="M920 312.5H925" stroke="#111" stroke-width="1.2"/><path d="M927 312.5H933" stroke="#8a8a8a" stroke-dasharray="1 1"/><path d="M936 312L939 316L945 307" fill="none" stroke="#6a6a80" stroke-width="1.3"/><rect x="951" y="320" width="14" height="15" fill="#e6e6ea"/><rect x="936.5" y="323.5" width="8" height="8" fill="#fff" stroke="#777"/><path d="M938 327.5H943" stroke="#111" stroke-width="1.2"/><path d="M945 327.5H951" stroke="#8a8a8a" stroke-dasharray="1 1"/><path d="M954 327L957 331L963 322" fill="none" stroke="#6a6a80" stroke-width="1.3"/><rect x="969" y="335" width="14" height="15" fill="#e6e6ea"/><rect x="954.5" y="338.5" width="8" height="8" fill="#fff" stroke="#777"/><path d="M956 342.5H961" stroke="#111" stroke-width="1.2"/><path d="M963 342.5H969" stroke="#8a8a8a" stroke-dasharray="1 1"/><path d="M958.5 340V345" stroke="#111" stroke-width="1.2"/><path d="M975 339.5L978.5 342.5L975 345.5Z" fill="#3a3a50"/><rect x="951" y="350" width="14" height="15" fill="#e6e6ea"/><rect x="936.5" y="353.5" width="8" height="8" fill="#fff" stroke="#777"/><path d="M938 357.5H943" stroke="#111" stroke-width="1.2"/><path d="M945 357.5H951" stroke="#8a8a8a" stroke-dasharray="1 1"/><path d="M954 357L957 361L963 352" fill="none" stroke="#6a6a80" stroke-width="1.3"/><rect x="969" y="365" width="14" height="15" fill="#e6e6ea"/><rect x="954.5" y="368.5" width="8" height="8" fill="#fff" stroke="#777"/><path d="M956 372.5H961" stroke="#111" stroke-width="1.2"/><path d="M963 372.5H969" stroke="#8a8a8a" stroke-dasharray="1 1"/><path d="M958.5 370V375" stroke="#111" stroke-width="1.2"/><path d="M975 369.5L978.5 372.5L975 375.5Z" fill="#3a3a50"/><rect x="969" y="380" width="14" height="15" fill="#e6e6ea"/><rect x="954.5" y="383.5" width="8" height="8" fill="#fff" stroke="#777"/><path d="M956 387.5H961" stroke="#111" stroke-width="1.2"/><path d="M963 387.5H969" stroke="#8a8a8a" stroke-dasharray="1 1"/><path d="M958.5 385V390" stroke="#111" stroke-width="1.2"/><path d="M975 384.5L978.5 387.5L975 390.5Z" fill="#3a3a50"/><rect x="969" y="395" width="14" height="15" fill="#e6e6ea"/><rect x="954.5" y="398.5" width="8" height="8" fill="#fff" stroke="#777"/><path d="M956 402.5H961" stroke="#111" stroke-width="1.2"/><path d="M963 402.5H969" stroke="#8a8a8a" stroke-dasharray="1 1"/><path d="M958.5 400V405" stroke="#111" stroke-width="1.2"/><path d="M975 399.5L978.5 402.5L975 405.5Z" fill="#3a3a50"/><rect x="969" y="410" width="14" height="15" fill="#e6e6ea"/><rect x="954.5" y="413.5" width="8" height="8" fill="#fff" stroke="#777"/><path d="M956 417.5H961" stroke="#111" stroke-width="1.2"/><path d="M963 417.5H969" stroke="#8a8a8a" stroke-dasharray="1 1"/><path d="M958.5 415V420" stroke="#111" stroke-width="1.2"/><path d="M975 414.5L978.5 417.5L975 420.5Z" fill="#3a3a50"/><rect x="969" y="425" width="14" height="15" fill="#e6e6ea"/><rect x="954.5" y="428.5" width="8" height="8" fill="#fff" stroke="#777"/><path d="M956 432.5H961" stroke="#111" stroke-width="1.2"/><path d="M963 432.5H969" stroke="#8a8a8a" stroke-dasharray="1 1"/><path d="M958.5 430V435" stroke="#111" stroke-width="1.2"/><path d="M975 429.5L978.5 432.5L975 435.5Z" fill="#3a3a50"/><rect x="951" y="440" width="14" height="15" fill="#e6e6ea"/><rect x="936.5" y="443.5" width="8" height="8" fill="#fff" stroke="#777"/><path d="M938 447.5H943" stroke="#111" stroke-width="1.2"/><path d="M945 447.5H951" stroke="#8a8a8a" stroke-dasharray="1 1"/><path d="M954 447L957 451L963 442" fill="none" stroke="#6a6a80" stroke-width="1.3"/><rect x="969" y="455" width="14" height="15" fill="#e6e6ea"/><rect x="954.5" y="458.5" width="8" height="8" fill="#fff" stroke="#777"/><path d="M956 462.5H961" stroke="#111" stroke-width="1.2"/><path d="M963 462.5H969" stroke="#8a8a8a" stroke-dasharray="1 1"/><path d="M958.5 460V465" stroke="#111" stroke-width="1.2"/><path d="M975 459.5L978.5 462.5L975 465.5Z" fill="#3a3a50"/><rect x="951" y="470" width="14" height="15" fill="#e6e6ea"/><rect x="936.5" y="473.5" width="8" height="8" fill="#fff" stroke="#777"/><path d="M938 477.5H943" stroke="#111" stroke-width="1.2"/><path d="M945 477.5H951" stroke="#8a8a8a" stroke-dasharray="1 1"/><path d="M954 477L957 481L963 472" fill="none" stroke="#6a6a80" stroke-width="1.3"/><rect x="969" y="485" width="14" height="15" fill="#e6e6ea"/><rect x="954.5" y="488.5" width="8" height="8" fill="#fff" stroke="#777"/><path d="M956 492.5H961" stroke="#111" stroke-width="1.2"/><path d="M963 492.5H969" stroke="#8a8a8a" stroke-dasharray="1 1"/><path d="M958.5 490V495" stroke="#111" stroke-width="1.2"/><path d="M975 489.5L978.5 492.5L975 495.5Z" fill="#3a3a50"/><rect x="933" y="500" width="14" height="15" fill="#e6e6ea"/><rect x="918.5" y="503.5" width="8" height="8" fill="#fff" stroke="#777"/><path d="M920 507.5H925" stroke="#111" stroke-width="1.2"/><path d="M927 507.5H933" stroke="#8a8a8a" stroke-dasharray="1 1"/><path d="M936 503L944 511M944 503L936 511" stroke="#d42020" stroke-width="1.8"/></svg>
<div class="a" style="left:915px;top:260px;width:333px;height:251px;overflow:hidden">
<div class="t" style="left:72px;top:3.11px;font-size:10.5px;line-height:10.5px;color:#222;transform:scaleX(0.9489)">Anforderungen LHeimBauVO erfüllt:</div>
<div class="t" style="left:72px;top:18.11px;font-size:10.5px;line-height:10.5px;color:#222;transform:scaleX(0.9489)">Bemerkung und Fristdatum:</div>
<div class="t" style="left:72px;top:33.11px;font-size:10.5px;line-height:10.5px;color:#222;transform:scaleX(0.9489)">Wohnform:</div>
<div class="t" style="left:36px;top:48.11px;font-size:10.5px;line-height:10.5px;color:#222;transform:scaleX(0.9489)">Bewohnervertretung</div>
<div class="t" style="left:54px;top:63.11px;font-size:10.5px;line-height:10.5px;color:#222;transform:scaleX(0.9489)">Angehörigen- und Betreuerbeirat</div>
<div class="t" style="left:72px;top:78.11px;font-size:10.5px;line-height:10.5px;color:#222;transform:scaleX(0.9489)">Ansprechpartner: Maiser, Hans</div>
<div class="t" style="left:54px;top:93.11px;font-size:10.5px;line-height:10.5px;color:#222;transform:scaleX(0.9489)">Bewohnerbeirat</div>
<div class="t" style="left:72px;top:108.11px;font-size:10.5px;line-height:10.5px;color:#222;transform:scaleX(0.9489)">Beginn der Amtszeit:</div>
<div class="t" style="left:72px;top:123.11px;font-size:10.5px;line-height:10.5px;color:#222;transform:scaleX(0.9489)">Beiratsmitglied extern1: Maiser, Hans</div>
<div class="t" style="left:72px;top:138.11px;font-size:10.5px;line-height:10.5px;color:#222;transform:scaleX(0.9489)">Beiratsmitglied extern2: Caritas</div>
<div class="t" style="left:72px;top:153.11px;font-size:10.5px;line-height:10.5px;color:#222;transform:scaleX(0.9489)">Ende der Amtszeit:</div>
<div class="t" style="left:72px;top:168.11px;font-size:10.5px;line-height:10.5px;color:#222;transform:scaleX(0.9489)">Wahl:</div>
<div class="t" style="left:54px;top:183.11px;font-size:10.5px;line-height:10.5px;color:#222;transform:scaleX(0.9489)">Bewohnerfürsprecher</div>
<div class="t" style="left:72px;top:198.11px;font-size:10.5px;line-height:10.5px;color:#222;transform:scaleX(0.9489)">Bewohnerfürsprecher: Frank, Jan</div>
<div class="t" style="left:54px;top:213.11px;font-size:10.5px;line-height:10.5px;color:#222;transform:scaleX(0.9489)">Fürsprechergremium</div>
<div class="t" style="left:72px;top:228.11px;font-size:10.5px;line-height:10.5px;color:#222;transform:scaleX(0.9489)">Mitglied2: Egelbert, Franz</div>
<div class="t" style="left:36px;top:243.11px;font-size:10.5px;line-height:10.5px;color:#222;transform:scaleX(0.9489)">weitere Merkmale</div>
</div>
<div class="a" style="left:1248px;top:260px;width:15px;height:251px;background:#fafafa;border-left:1px solid #e2e2e2;"></div>
<div class="a" style="left:1248px;top:300px;width:14px;height:123px;background:#d8d8d8;border:1px solid #c4c4c4;"></div>
<svg class="a" style="left:1248px;top:260px" width="15" height="251" viewBox="0 0 15 251"><g fill="none" stroke="#606060" stroke-width="1.2"><path d="M4 11L7.5 7.5L11 11"/><path d="M4 239L7.5 242.5L11 239"/><path d="M4 99H11M4 101.5H11M4 104H11"/></g></svg>
<div class="a" style="left:913px;top:511px;width:350px;height:10px;background:#9bcbfa;"></div>
<div class="a" style="left:913px;top:521px;width:350px;height:18px;background:#fff;"></div>
<div class="t" style="left:914.00px;top:524.11px;font-size:10.5px;line-height:10.5px;color:#111;transform:scaleX(0.9500);">Personalverwaltung</div>
<div class="a" style="left:1251px;top:522px;width:12px;height:16px;background:#fff;border:1px solid #9a9a9a"></div>
<svg class="a" style="left:1252.0px;top:526.0px" width="10" height="8" viewBox="0 0 10 8"><path d="M2 2.5L5 5.5L8 2.5" fill="none" stroke="#3a3a3a" stroke-width="1.5"/></svg>
<div class="a" style="left:913px;top:538px;width:350px;height:3px;background:#8fa9c6;"></div>
<div class="a" style="left:912px;top:541px;width:351px;height:244px;background:#fff;border-left:2px solid #7a7a7a;"></div>
<svg class="a" style="left:0;top:0" width="1339" height="875" viewBox="0 0 1339 875"><path d="M922.5 557V626" stroke="#8a8a8a" stroke-dasharray="1 1"/><rect x="916" y="543" width="13" height="14" fill="#e6e6e2"/><g transform="translate(917.5,544.5)"><path d="M3.5 1.2C5 1.2 5.6 2.4 5.3 3.6C5 4.6 4.2 5 3.6 5C4.6 5.6 4.8 6.8 4.4 8.2C4.1 9.4 3.4 10 2.4 10C3 9 3 8 2.4 7.4C1.6 7.8 0.8 8.4 0.4 8.8C0.2 7.6 0.8 6.4 2 5.6C1.6 4.8 1.6 3.6 2 2.6C2.3 1.8 2.8 1.2 3.5 1.2Z" fill="#222"/><circle cx="7.6" cy="3" r="1.5" fill="none" stroke="#333" stroke-width="1"/><path d="M6.2 5.6H9.4M7.6 5.6C9 5.6 9.4 6.6 9.2 7.4" fill="none" stroke="#333" stroke-width="1"/></g><path d="M922 565.5H941" stroke="#8a8a8a" stroke-dasharray="1 1"/><rect x="941" y="558" width="13" height="14" fill="#e6e6e2"/><g transform="translate(942.5,559.5)"><path d="M3.5 1.2C5 1.2 5.6 2.4 5.3 3.6C5 4.6 4.2 5 3.6 5C4.6 5.6 4.8 6.8 4.4 8.2C4.1 9.4 3.4 10 2.4 10C3 9 3 8 2.4 7.4C1.6 7.8 0.8 8.4 0.4 8.8C0.2 7.6 0.8 6.4 2 5.6C1.6 4.8 1.6 3.6 2 2.6C2.3 1.8 2.8 1.2 3.5 1.2Z" fill="#222"/><circle cx="7.6" cy="3" r="1.5" fill="none" stroke="#333" stroke-width="1"/><path d="M6.2 5.6H9.4M7.6 5.6C9 5.6 9.4 6.6 9.2 7.4" fill="none" stroke="#333" stroke-width="1"/></g><path d="M922 580.5H941" stroke="#8a8a8a" stroke-dasharray="1 1"/><rect x="941" y="573" width="13" height="14" fill="#e6e6e2"/><g transform="translate(942.5,574.5)"><path d="M3.5 1.2C5 1.2 5.6 2.4 5.3 3.6C5 4.6 4.2 5 3.6 5C4.6 5.6 4.8 6.8 4.4 8.2C4.1 9.4 3.4 10 2.4 10C3 9 3 8 2.4 7.4C1.6 7.8 0.8 8.4 0.4 8.8C0.2 7.6 0.8 6.4 2 5.6C1.6 4.8 1.6 3.6 2 2.6C2.3 1.8 2.8 1.2 3.5 1.2Z" fill="#222"/><circle cx="7.6" cy="3" r="1.5" fill="none" stroke="#333" stroke-width="1"/><path d="M6.2 5.6H9.4M7.6 5.6C9 5.6 9.4 6.6 9.2 7.4" fill="none" stroke="#333" stroke-width="1"/></g><path d="M922 595.5H941" stroke="#8a8a8a" stroke-dasharray="1 1"/><rect x="941" y="588" width="13" height="14" fill="#e6e6e2"/><g transform="translate(942.5,589.5)"><path d="M3.5 1.2C5 1.2 5.6 2.4 5.3 3.6C5 4.6 4.2 5 3.6 5C4.6 5.6 4.8 6.8 4.4 8.2C4.1 9.4 3.4 10 2.4 10C3 9 3 8 2.4 7.4C1.6 7.8 0.8 8.4 0.4 8.8C0.2 7.6 0.8 6.4 2 5.6C1.6 4.8 1.6 3.6 2 2.6C2.3 1.8 2.8 1.2 3.5 1.2Z" fill="#222"/><circle cx="7.6" cy="3" r="1.5" fill="none" stroke="#333" stroke-width="1"/><path d="M6.2 5.6H9.4M7.6 5.6C9 5.6 9.4 6.6 9.2 7.4" fill="none" stroke="#333" stroke-width="1"/></g><path d="M922 610.5H941" stroke="#8a8a8a" stroke-dasharray="1 1"/><rect x="941" y="603" width="13" height="14" fill="#e6e6e2"/><g transform="translate(942.5,604.5)"><path d="M3.5 1.2C5 1.2 5.6 2.4 5.3 3.6C5 4.6 4.2 5 3.6 5C4.6 5.6 4.8 6.8 4.4 8.2C4.1 9.4 3.4 10 2.4 10C3 9 3 8 2.4 7.4C1.6 7.8 0.8 8.4 0.4 8.8C0.2 7.6 0.8 6.4 2 5.6C1.6 4.8 1.6 3.6 2 2.6C2.3 1.8 2.8 1.2 3.5 1.2Z" fill="#222"/><circle cx="7.6" cy="3" r="1.5" fill="none" stroke="#333" stroke-width="1"/><path d="M6.2 5.6H9.4M7.6 5.6C9 5.6 9.4 6.6 9.2 7.4" fill="none" stroke="#333" stroke-width="1"/></g><path d="M922 625.5H941" stroke="#8a8a8a" stroke-dasharray="1 1"/><rect x="941" y="618" width="13" height="14" fill="#e6e6e2"/><g transform="translate(942.5,619.5)"><path d="M3.5 1.2C5 1.2 5.6 2.4 5.3 3.6C5 4.6 4.2 5 3.6 5C4.6 5.6 4.8 6.8 4.4 8.2C4.1 9.4 3.4 10 2.4 10C3 9 3 8 2.4 7.4C1.6 7.8 0.8 8.4 0.4 8.8C0.2 7.6 0.8 6.4 2 5.6C1.6 4.8 1.6 3.6 2 2.6C2.3 1.8 2.8 1.2 3.5 1.2Z" fill="#222"/><circle cx="7.6" cy="3" r="1.5" fill="none" stroke="#333" stroke-width="1"/><path d="M6.2 5.6H9.4M7.6 5.6C9 5.6 9.4 6.6 9.2 7.4" fill="none" stroke="#333" stroke-width="1"/></g></svg>
<div class="t" style="left:933.50px;top:545.11px;font-size:10.5px;line-height:10.5px;color:#222;transform:scaleX(0.9500);">Personalverwaltung - 25.06.2015</div>
<div class="t" style="left:958.90px;top:560.11px;font-size:10.5px;line-height:10.5px;color:#222;transform:scaleX(0.9500);">Heidi, Keller</div>
<div class="t" style="left:958.90px;top:575.11px;font-size:10.5px;line-height:10.5px;color:#222;transform:scaleX(0.9500);">Ingrid, Pfeiler</div>
<div class="t" style="left:958.90px;top:590.11px;font-size:10.5px;line-height:10.5px;color:#222;transform:scaleX(0.9500);">Mustermann, Max</div>
<div class="t" style="left:958.90px;top:605.11px;font-size:10.5px;line-height:10.5px;color:#222;transform:scaleX(0.9500);">Robert, Kallfuß</div>
<div class="t" style="left:958.90px;top:620.11px;font-size:10.5px;line-height:10.5px;color:#222;transform:scaleX(0.9500);">Zamira, Schuller</div>
<div class="a" style="left:63px;top:797px;width:1212px;height:2px;background:#0b0d12;"></div>
<div class="a" style="left:69px;top:799px;width:1200px;height:76px;background:#b9bcc2;"></div>
<div class="a" style="left:69px;top:799px;width:1200px;height:7px;background:#aeb0b4;"></div>
<div class="a" style="left:74px;top:806px;width:2px;height:69px;background:#85888d;"></div>
<div class="a" style="left:79px;top:806px;width:821px;height:69px;background:#94a8c3;"></div>
<div class="a" style="left:912px;top:806px;width:2px;height:69px;background:#6e7176;"></div>
</body></html>
